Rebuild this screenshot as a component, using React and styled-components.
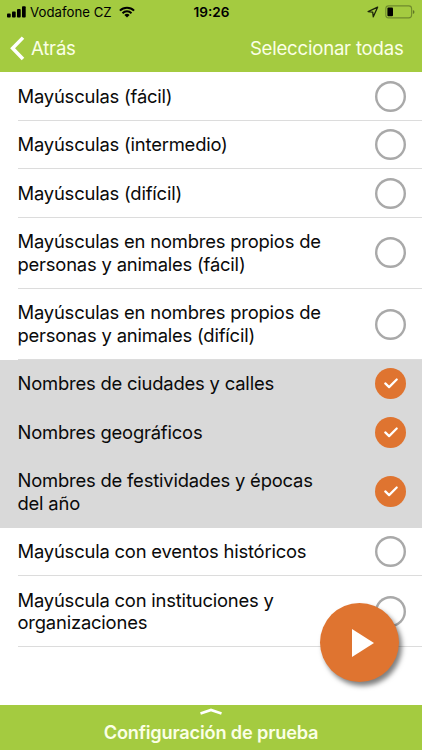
import React, { useState } from 'react';
import styled, { createGlobalStyle } from 'styled-components';

const colors = {
  green: '#a4cb40',
  orange: '#df7430',
  selected: '#d9d9d9',
  line: '#dcdcdc',
  ring: '#a9a9a9',
};

const topics = [
  { id: 1, title: 'Mayúsculas (fácil)' },
  { id: 2, title: 'Mayúsculas (intermedio)' },
  { id: 3, title: 'Mayúsculas (difícil)' },
  { id: 4, title: 'Mayúsculas en nombres propios de personas y animales (fácil)' },
  { id: 5, title: 'Mayúsculas en nombres propios de personas y animales (difícil)' },
  { id: 6, title: 'Nombres de ciudades y calles' },
  { id: 7, title: 'Nombres geográficos' },
  { id: 8, title: 'Nombres de festividades y épocas del año' },
  { id: 9, title: 'Mayúscula con eventos históricos' },
  { id: 10, title: 'Mayúscula con instituciones y organizaciones' },
];

const SignalIcon = () => (
  <svg width="19" height="12" viewBox="0 0 19 12">
    <rect x="0" y="7.6" width="3.7" height="3.8" rx="0.9" />
    <rect x="5" y="5.5" width="3.7" height="5.9" rx="0.9" />
    <rect x="10" y="3" width="3.7" height="8.4" rx="0.9" />
    <rect x="15" y="0.3" width="3.7" height="11.1" rx="0.9" />
  </svg>
);

const WifiIcon = () => (
  <svg width="16" height="12" viewBox="0 0 16 12">
    <g fill="none" stroke="#000" strokeWidth="2">
      <path d="M0.9 4.6A10 10 0 0 1 15.1 4.6" />
      <path d="M3.5 7.2A6.4 6.4 0 0 1 12.5 7.2" />
    </g>
    <path d="M5.4 9A3.7 3.7 0 0 1 10.6 9L8 11.6Z" />
  </svg>
);

const LocationIcon = () => (
  <svg width="12" height="12" viewBox="0 0 12 12">
    <path
      d="M10.6 1.2L1.1 5.6L5.7 6.2L6.3 10.8Z"
      fill="none"
      stroke="#1c240a"
      strokeWidth="1.3"
      strokeLinejoin="round"
    />
  </svg>
);

const BatteryIcon = () => (
  <svg width="30" height="14" viewBox="0 0 30 14">
    <rect
      x="0.8"
      y="0.9"
      width="25.8"
      height="12"
      rx="2.8"
      fill="none"
      stroke="#6f8a2c"
      strokeWidth="1.1"
    />
    <rect x="2.4" y="2.6" width="5.6" height="8.6" rx="1" />
    <path d="M27.9 4.9Q29.5 5.4 29.5 6.9T27.9 8.9Z" fill="#5f7626" />
  </svg>
);

const BackIcon = () => (
  <svg width="15" height="25" viewBox="0 0 15 25">
    <path d="M13 1.6L2.6 12.3L13 23" fill="none" stroke="#fff" strokeWidth="3.5" />
  </svg>
);

const CheckIcon = () => (
  <svg width="14" height="11" viewBox="0 0 14 11">
    <path
      d="M1.3 5.4L5.1 9.1L12.7 1.5"
      fill="none"
      stroke="#fff"
      strokeWidth="2.2"
      strokeLinecap="round"
      strokeLinejoin="round"
    />
  </svg>
);

const App = () => {
  const [selected, setSelected] = useState([6, 7, 8]);

  const toggle = (id) => {
    setSelected((prev) =>
      prev.includes(id) ? prev.filter((item) => item !== id) : [...prev, id]
    );
  };

  return (
    <Screen>
      <GlobalStyle />
      <Header>
        <StatusBar>
          <StatusGroup>
            <SignalIcon />
            <Carrier>Vodafone CZ</Carrier>
            <WifiIcon />
          </StatusGroup>
          <Clock>19:26</Clock>
          <StatusGroup $end>
            <LocationIcon />
            <BatteryIcon />
          </StatusGroup>
        </StatusBar>
        <NavBar>
          <NavButton>
            <BackIcon />
            <NavLabel>Atrás</NavLabel>
          </NavButton>
          <NavButton onClick={() => setSelected(topics.map((topic) => topic.id))}>
            <NavLabel>Seleccionar todas</NavLabel>
          </NavButton>
        </NavBar>
      </Header>
      <List>
        {topics.map((topic) => {
          const active = selected.includes(topic.id);
          return (
            <Row key={topic.id} $active={active} onClick={() => toggle(topic.id)}>
              <RowContent $active={active}>
                <Title>{topic.title}</Title>
                <Radio $active={active}>{active && <CheckIcon />}</Radio>
              </RowContent>
            </Row>
          );
        })}
      </List>
      <PlayButton aria-label="Play">
        <svg width="22" height="28" viewBox="0 0 22 28">
          <path d="M0 0L22 14L0 28Z" fill="#fff" />
        </svg>
      </PlayButton>
      <Footer>
        <svg width="22" height="7" viewBox="0 0 22 7">
          <path d="M0.5 5.5L11 1.9L21.5 5.5" fill="none" stroke="#fff" strokeWidth="2.6" />
        </svg>
        <FooterLabel>Configuración de prueba</FooterLabel>
      </Footer>
    </Screen>
  );
};

export default App;

// STYLING
const GlobalStyle = createGlobalStyle`
  * {
    box-sizing: border-box;
  }
  body {
    margin: 0;
    font-family: Inter, 'Liberation Sans', sans-serif;
  }
  button {
    padding: 0;
    border: 0;
    background: none;
    font: inherit;
  }
  svg {
    display: block;
    flex-shrink: 0;
  }
`;

const Screen = styled.div`
  position: relative;
  display: flex;
  flex-direction: column;
  width: 422px;
  height: 750px;
  overflow: hidden;
  background: #fff;
`;

const Header = styled.header`
  height: 72.4px;
  flex-shrink: 0;
  background: ${colors.green};
`;

const StatusBar = styled.div`
  display: grid;
  grid-template-columns: 1fr auto 1fr;
  align-items: center;
  height: 24px;
  padding: 0 7px;
`;

const StatusGroup = styled.div`
  display: flex;
  align-items: center;
  justify-content: ${({ $end }) => ($end ? 'flex-end' : 'flex-start')};
  gap: ${({ $end }) => ($end ? '6px' : '0')};
`;

const Carrier = styled.span`
  margin: 0 7px 0 4px;
  font-size: 13.2px;
  letter-spacing: 0.03px;
  white-space: nowrap;
`;

const Clock = styled.span`
  padding-left: 1px;
  font-size: 13.6px;
  font-weight: 600;
`;

const NavBar = styled.nav`
  display: flex;
  align-items: center;
  justify-content: space-between;
  height: 48px;
  padding: 0 18.5px 0 10px;
`;

const NavButton = styled.button`
  display: flex;
  align-items: center;
  gap: 6px;
`;

const NavLabel = styled.span`
  font-size: 18.6px;
  letter-spacing: -0.22px;
  line-height: 24px;
  color: #fbffe6;
`;

const List = styled.div`
  flex: 1;
`;

const Row = styled.div`
  padding-left: 17.5px;
  background: ${({ $active }) => ($active ? colors.selected : '#fff')};
`;

const RowContent = styled.div`
  display: flex;
  align-items: center;
  justify-content: space-between;
  padding: 12.7px 16px 12px 0;
  border-bottom: 1px solid ${({ $active }) => ($active ? 'transparent' : colors.line)};
`;

const Title = styled.div`
  width: 315px;
  font-size: 18.4px;
  letter-spacing: -0.19px;
  line-height: 22.7px;
  color: #0a0a0a;
`;

const Radio = styled.div`
  display: flex;
  align-items: center;
  justify-content: center;
  width: 31px;
  height: 31px;
  margin: -5px 0;
  flex-shrink: 0;
  border-radius: 50%;
  background: ${({ $active }) => ($active ? colors.orange : 'transparent')};
  box-shadow: ${({ $active }) => ($active ? 'none' : `inset 0 0 0 2.4px ${colors.ring}`)};
`;

const PlayButton = styled.button`
  position: absolute;
  right: 23px;
  bottom: 68px;
  display: flex;
  align-items: center;
  justify-content: center;
  width: 79px;
  height: 79px;
  padding-left: 6px;
  border-radius: 50%;
  background: ${colors.orange};
  box-shadow: 3px 4px 5px rgba(0, 0, 0, 0.5);
`;

const Footer = styled.footer`
  display: flex;
  flex-direction: column;
  align-items: center;
  height: 45.5px;
  padding-top: 3.5px;
  background: ${colors.green};
`;

const FooterLabel = styled.div`
  margin-top: 6px;
  font-size: 18.2px;
  font-weight: 600;
  letter-spacing: -0.18px;
  line-height: 23px;
  color: #fbffe6;
`;
